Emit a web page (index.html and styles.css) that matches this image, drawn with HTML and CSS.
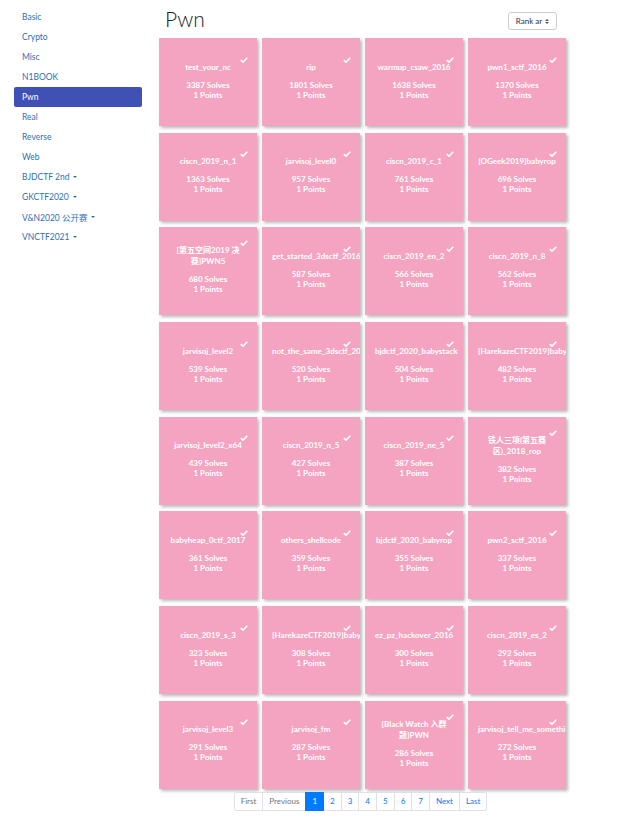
FILE: index.html
```html
<!DOCTYPE html>
<html>
<head>
<meta charset="utf-8">
<link rel="stylesheet" href="styles.css">
</head>
<body>
<div class="page">
  <nav class="sidebar">
    <a class="nav-item">Basic</a>
    <a class="nav-item">Crypto</a>
    <a class="nav-item">Misc</a>
    <a class="nav-item">N1BOOK</a>
    <a class="nav-item active">Pwn</a>
    <a class="nav-item">Real</a>
    <a class="nav-item">Reverse</a>
    <a class="nav-item">Web</a>
    <a class="nav-item">BJDCTF 2nd <span class="caret"></span></a>
    <a class="nav-item">GKCTF2020 <span class="caret"></span></a>
    <a class="nav-item">V&amp;N2020 公开赛 <span class="caret"></span></a>
    <a class="nav-item">VNCTF2021 <span class="caret"></span></a>
  </nav>
  <main class="main">
    <div class="header">
      <h1 class="title">Pwn</h1>
      <div class="select">Rank ar <span class="updown"><span class="up"></span><span class="down"></span></span></div>
    </div>
    <div class="grid" id="grid"></div>
    <div class="pager-wrap">
      <ul class="pager">
        <li class="pg disabled">First</li>
        <li class="pg disabled">Previous</li>
        <li class="pg current">1</li>
        <li class="pg">2</li>
        <li class="pg">3</li>
        <li class="pg">4</li>
        <li class="pg">5</li>
        <li class="pg">6</li>
        <li class="pg">7</li>
        <li class="pg">Next</li>
        <li class="pg">Last</li>
      </ul>
    </div>
  </main>
</div>
<script>
var data = [
["test_your_nc",3387],["rip",1801],["warmup_csaw_2016",1638],["pwn1_sctf_2016",1370],
["ciscn_2019_n_1",1363],["jarvisoj_level0",957],["ciscn_2019_c_1",761],["[OGeek2019]babyrop",696],
["[第五空间2019 决赛]PWN5",680],["get_started_3dsctf_2016",587],["ciscn_2019_en_2",566],["ciscn_2019_n_8",562],
["jarvisoj_level2",539],["not_the_same_3dsctf_2016",520],["bjdctf_2020_babystack",504],["[HarekazeCTF2019]baby_rop",482],
["jarvisoj_level2_x64",439],["ciscn_2019_n_5",427],["ciscn_2019_ne_5",387],["铁人三项(第五赛区)_2018_rop",382],
["babyheap_0ctf_2017",361],["others_shellcode",359],["bjdctf_2020_babyrop",355],["pwn2_sctf_2016",337],
["ciscn_2019_s_3",323],["[HarekazeCTF2019]baby_rop2",308],["ez_pz_hackover_2016",300],["ciscn_2019_es_2",292],
["jarvisoj_level3",291],["jarvisoj_fm",287],["[Black Watch 入群题]PWN",286],["jarvisoj_tell_me_something",272]
];
var g = document.getElementById('grid');
var check = '<svg class="check" viewBox="0 0 8 6" width="8" height="6"><path d="M0.8 3.1 L3 5.2 L7.3 0.8" fill="none" stroke="#fff" stroke-width="1.6"/></svg>';
data.forEach(function(d){
  var c = document.createElement('div');
  c.className = 'card';
  var inner = document.createElement('div');
  inner.className = 'card-body';
  var t = document.createElement('div');
  t.className = 'card-title';
  t.textContent = d[0];
  inner.appendChild(t);
  inner.insertAdjacentHTML('beforeend', check);
  var s = document.createElement('div');
  s.className = 'card-line';
  s.textContent = d[1] + ' Solves';
  var p = document.createElement('div');
  p.className = 'card-line';
  p.textContent = '1 Points';
  inner.appendChild(s);
  inner.appendChild(p);
  c.appendChild(inner);
  g.appendChild(c);
});
</script>
</body>
</html>
```

FILE: styles.css
```css
* { box-sizing: border-box; }
html, body { margin: 0; padding: 0; background: #fff; }
body { font-family: Lato, "Noto Sans CJK SC", sans-serif; color: #333; }

.page { display: flex; align-items: flex-start; }

.sidebar {
  width: 159px;
  padding: 7px 0 0 14px;
  display: flex;
  flex-direction: column;
}
.nav-item {
  display: flex;
  align-items: center;
  width: 128px;
  height: 20px;
  padding-left: 8px;
  font-size: 8.5px;
  color: #2f6fb3;
  border-radius: 2px;
  white-space: nowrap;
}
.nav-item.active { background: #3f51b5; color: #fff; }
.caret {
  display: inline-block;
  width: 0; height: 0;
  margin-left: 4px;
  border-left: 2.5px solid transparent;
  border-right: 2.5px solid transparent;
  border-top: 2.5px solid #2f6fb3;
}

.main { width: 407px; }

.header {
  height: 38px;
  display: flex;
  justify-content: space-between;
  align-items: flex-start;
  padding: 0 9px 0 6px;
}
.title {
  margin: 7px 0 0 0;
  font-size: 21px;
  line-height: 24px;
  font-weight: 300;
  color: #222;
}
.select {
  margin-top: 12px;
  width: 49px;
  height: 18px;
  border: 1px solid #ccc;
  border-radius: 3px;
  font-size: 8px;
  color: #333;
  display: flex;
  align-items: center;
  justify-content: center;
  gap: 3px;
}
.updown { display: inline-flex; flex-direction: column; gap: 1px; }
.up, .down { width: 0; height: 0; border-left: 2px solid transparent; border-right: 2px solid transparent; }
.up { border-bottom: 2.5px solid #555; }
.down { border-top: 2.5px solid #555; }

.grid {
  display: grid;
  grid-template-columns: repeat(4, 98px);
  grid-auto-rows: 88px;
  column-gap: 5px;
  row-gap: 6.7px;
}
.card {
  background: #f4a4c0;
  box-shadow: 2px 2px 3px rgba(0,0,0,0.28);
  display: flex;
  flex-direction: column;
  justify-content: center;
  padding: 0 10px 3px 10px;
  overflow: hidden;
  color: #fff;
  font-weight: 700;
  text-align: center;
}
.card-body { position: relative; }
.card-title {
  font-size: 8px;
  line-height: 11px;
  margin-bottom: 7px;
}
.card-line {
  font-size: 8px;
  line-height: 10px;
}
.check {
  position: absolute;
  top: -5px;
  right: -0.5px;
}

.pager-wrap { display: flex; justify-content: center; margin-top: 3px; padding-right: 4px; }
.pager {
  display: flex;
  list-style: none;
  margin: 0;
  padding: 0;
}
.pg {
  height: 19px;
  display: flex;
  align-items: center;
  padding: 0 6px;
  font-size: 8px;
  color: #007bff;
  border: 1px solid #dee2e6;
  margin-left: -1px;
  background: #fff;
}
.pg:first-child { border-radius: 2px 0 0 2px; margin-left: 0; }
.pg:last-child { border-radius: 0 2px 2px 0; }
.pg.disabled { color: #6c757d; }
.pg.current { background: #007bff; border-color: #007bff; color: #fff; position: relative; }
```
